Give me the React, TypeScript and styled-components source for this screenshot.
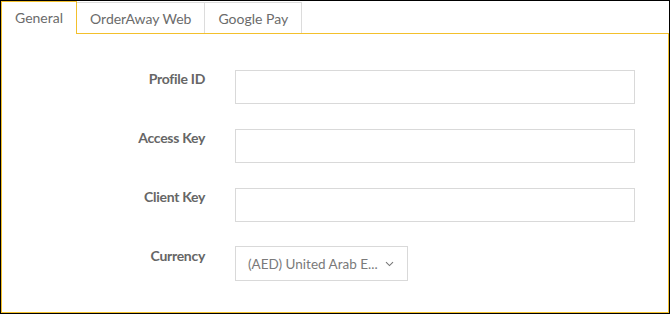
import styled, { createGlobalStyle } from "styled-components";

const GlobalStyle = createGlobalStyle`
  html, body {
    margin: 0;
    padding: 0;
    background: #ffffff;
  }
  * {
    box-sizing: border-box;
  }
`;

const accent = "#f3c02c";

const Frame = styled.div`
  width: 670px;
  height: 314px;
  border: 1px solid #000;
  display: flex;
  flex-direction: column;
  font-family: Lato, "Open Sans", sans-serif;
  background: #fff;
`;

const TabBar = styled.div`
  display: flex;
  align-items: flex-end;
  height: 32px;
  position: relative;
  z-index: 1;
`;

const Tab = styled.div<{ $active?: boolean }>`
  height: ${(p) => (p.$active ? "33px" : "31px")};
  margin-bottom: ${(p) => (p.$active ? "-1px" : "0")};
  padding: 0 13px ${(p) => (p.$active ? "1px" : "0")};
  display: flex;
  align-items: center;
  font-size: 14px;
  color: #6b6b6b;
  background: #fff;
  border-top: 1px solid ${(p) => (p.$active ? accent : "#dcdcdc")};
  border-right: 1px solid ${(p) => (p.$active ? accent : "#dcdcdc")};
  border-left: ${(p) => (p.$active ? `1px solid ${accent}` : "none")};
  cursor: pointer;
`;

const Panel = styled.div`
  flex: 1;
  border: 1px solid ${accent};
  padding-top: 36px;
  display: flex;
  flex-direction: column;
  gap: 25px;
`;

const Row = styled.div`
  display: grid;
  grid-template-columns: 203px 400px;
  column-gap: 30px;
  align-items: start;
`;

const Label = styled.label`
  text-align: right;
  font-size: 14px;
  font-weight: 700;
  color: #666;
  line-height: 18px;
  letter-spacing: -0.3px;
`;

const TextInput = styled.input`
  width: 400px;
  height: 34px;
  border: 1px solid #d9d9d9;
  border-radius: 0;
  outline: none;
  padding: 0 12px;
  font-family: inherit;
  font-size: 13px;
  color: #555;
`;

const SelectBox = styled.div`
  width: 173px;
  height: 35px;
  margin-top: -1px;
  border: 1px solid #d9d9d9;
  display: flex;
  align-items: center;
  justify-content: space-between;
  padding: 0 13px 0 12px;
  font-size: 13.5px;
  color: #7a7a7a;
`;

const Chevron = () => (
  <svg width="9" height="6" viewBox="0 0 9 6" fill="none">
    <path d="M1 1.2 L4.5 4.6 L8 1.2" stroke="#777" strokeWidth="1.1" />
  </svg>
);

const fields = ["Profile ID", "Access Key", "Client Key"];

const App = () => {
  return (
    <>
      <GlobalStyle />
      <Frame>
        <TabBar>
          <Tab $active>General</Tab>
          <Tab>OrderAway Web</Tab>
          <Tab>Google Pay</Tab>
        </TabBar>
        <Panel>
          {fields.map((f, i) => (
            <Row key={i}>
              <Label>{f}</Label>
              <TextInput type="text" />
            </Row>
          ))}
          <Row>
            <Label>Currency</Label>
            <SelectBox>
              <span>(AED) United Arab E...</span>
              <Chevron />
            </SelectBox>
          </Row>
        </Panel>
      </Frame>
    </>
  );
};

export default App;
